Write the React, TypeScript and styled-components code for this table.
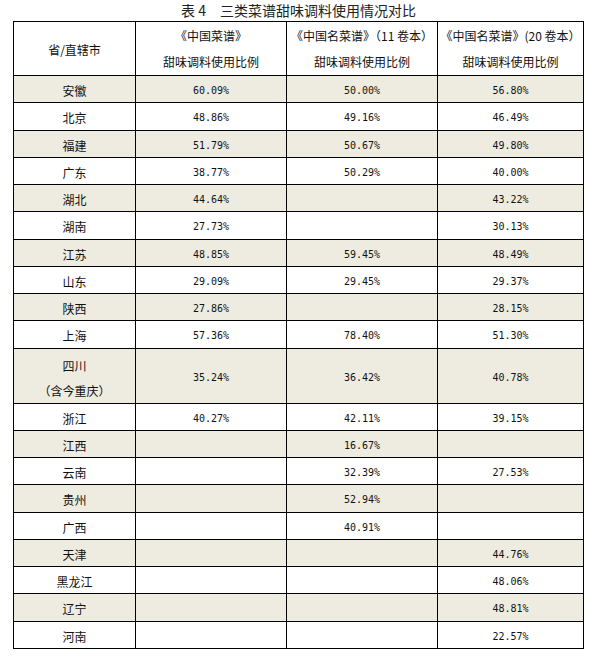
import React from "react";
import styled, { createGlobalStyle } from "styled-components";

const GlobalStyle = createGlobalStyle`
  html, body {
    margin: 0;
    padding: 0;
    background: #fff;
  }
  body {
    font-family: "Noto Sans CJK SC", "Noto Sans", sans-serif;
    color: #111;
  }
`;

const Page = styled.div`
  width: 607px;
  padding-left: 13px;
  box-sizing: border-box;
`;

const Table = styled.table`
  border-collapse: collapse;
  table-layout: fixed;
  width: 570px;
`;

const Caption = styled.caption`
  height: 21px;
  line-height: 21px;
  font-size: 14px;
  color: #222;
  text-align: center;
  white-space: pre;
`;

const HeadCell = styled.th`
  border: 1px solid #000;
  height: 52px;
  padding: 1px 0 0;
  font-size: 12px;
  font-weight: normal;
  text-align: center;
  vertical-align: middle;
  white-space: nowrap;
`;

const HeadLine = styled.span`
  display: block;
  line-height: 26px;
`;

const Row = styled.tr<{ $striped: boolean; $tall?: boolean }>`
  height: ${(p) => (p.$tall ? "54.5px" : "27.25px")};
  background: ${(p) => (p.$striped ? "#eeece1" : "#fff")};
`;

const NameCell = styled.td`
  border: 1px solid #000;
  padding: 4px 0 0;
  font-size: 12px;
  line-height: 18px;
  text-align: center;
  vertical-align: middle;
`;

const NameLine = styled.span`
  display: block;
  line-height: 25px;
`;

const ValueCell = styled.td`
  border: 1px solid #000;
  padding: 4px 0 0;
  font-family: "DejaVu Sans Mono", "Liberation Mono", monospace;
  font-size: 10px;
  line-height: 18px;
  text-align: center;
  vertical-align: middle;
`;

type Entry = {
  name: string;
  note?: string;
  values: [string, string, string];
};

const rows: Entry[] = [
  { name: "安徽", values: ["60.09%", "50.00%", "56.80%"] },
  { name: "北京", values: ["48.86%", "49.16%", "46.49%"] },
  { name: "福建", values: ["51.79%", "50.67%", "49.80%"] },
  { name: "广东", values: ["38.77%", "50.29%", "40.00%"] },
  { name: "湖北", values: ["44.64%", "", "43.22%"] },
  { name: "湖南", values: ["27.73%", "", "30.13%"] },
  { name: "江苏", values: ["48.85%", "59.45%", "48.49%"] },
  { name: "山东", values: ["29.09%", "29.45%", "29.37%"] },
  { name: "陕西", values: ["27.86%", "", "28.15%"] },
  { name: "上海", values: ["57.36%", "78.40%", "51.30%"] },
  { name: "四川", note: "（含今重庆）", values: ["35.24%", "36.42%", "40.78%"] },
  { name: "浙江", values: ["40.27%", "42.11%", "39.15%"] },
  { name: "江西", values: ["", "16.67%", ""] },
  { name: "云南", values: ["", "32.39%", "27.53%"] },
  { name: "贵州", values: ["", "52.94%", ""] },
  { name: "广西", values: ["", "40.91%", ""] },
  { name: "天津", values: ["", "", "44.76%"] },
  { name: "黑龙江", values: ["", "", "48.06%"] },
  { name: "辽宁", values: ["", "", "48.81%"] },
  { name: "河南", values: ["", "", "22.57%"] },
];

const books = ["《中国菜谱》", "《中国名菜谱》（11 卷本）", "《中国名菜谱》(20 卷本）"];

export default function App() {
  return (
    <>
      <GlobalStyle />
      <Page>
        <Table>
          <Caption>{"表 4　三类菜谱甜味调料使用情况对比"}</Caption>
          <colgroup>
            <col style={{ width: 122 }} />
            <col style={{ width: 151 }} />
            <col style={{ width: 151 }} />
            <col style={{ width: 146 }} />
          </colgroup>
          <thead>
            <tr>
              <HeadCell>省/直辖市</HeadCell>
              {books.map((b) => (
                <HeadCell key={b}>
                  <HeadLine>{b}</HeadLine>
                  <HeadLine>甜味调料使用比例</HeadLine>
                </HeadCell>
              ))}
            </tr>
          </thead>
          <tbody>
            {rows.map((r, i) => (
              <Row key={r.name} $striped={i % 2 === 0} $tall={!!r.note}>
                <NameCell>
                  {r.note ? (
                    <>
                      <NameLine>{r.name}</NameLine>
                      <NameLine>{r.note}</NameLine>
                    </>
                  ) : (
                    r.name
                  )}
                </NameCell>
                {r.values.map((v, j) => (
                  <ValueCell key={j}>{v}</ValueCell>
                ))}
              </Row>
            ))}
          </tbody>
        </Table>
      </Page>
    </>
  );
}
